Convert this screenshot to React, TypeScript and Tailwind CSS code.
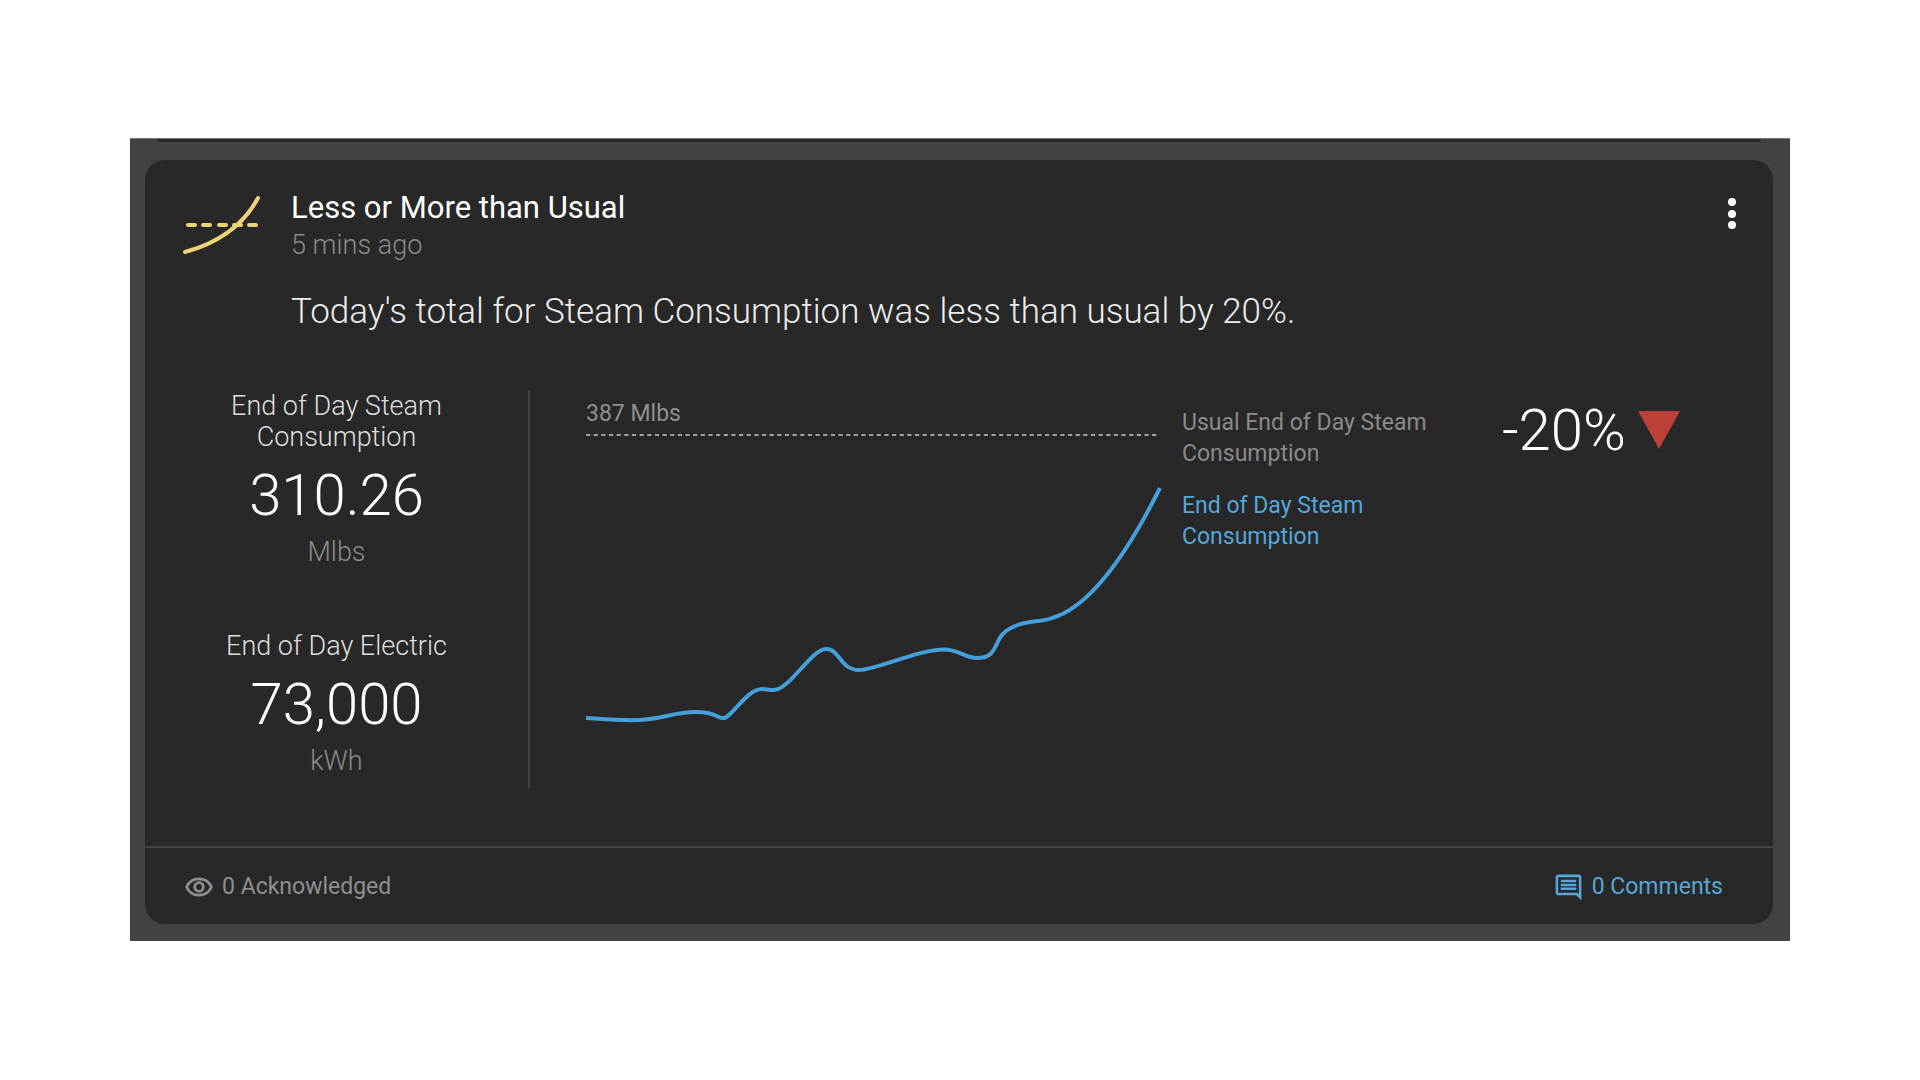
import { MdOutlineComment } from "react-icons/md";

const metrics = [
  { label: "End of Day Steam Consumption", value: "310.26", unit: "Mlbs" },
  { label: "End of Day Electric", value: "73,000", unit: "kWh" },
];

export default function App() {
  return (
    <div className="min-h-screen bg-white px-[130px] pt-[138px] pb-12 font-['Roboto',sans-serif]">
      <main className="overflow-hidden border-t border-[#777777] bg-[#424242] pr-[17px] pb-[17px] pl-[15px]">
        {/* Bottom edge of the previous card in the feed */}
        <div className="mx-3 mb-[18px] h-[3px] rounded-b-full bg-[#282828]" />

        <article className="rounded-[20px] bg-[#282828]">
          <header className="flex items-start pt-[29px] pr-[33px] pl-9">
            <TrendIcon />
            <div className="ml-[30px] flex-1">
              <h1 className="text-[31px] leading-[37px] text-white">Less or More than Usual</h1>
              <p className="text-[27px] leading-[38px] font-light text-[#8a8a8a]">5 mins ago</p>
              <p className="mt-[27px] text-[35px] leading-[42px] font-light text-[#ececec]">
                Today's total for Steam Consumption was less than usual by 20%.
              </p>
            </div>
            <button type="button" aria-label="More options" className="mt-2 cursor-pointer">
              <svg width="16" height="34" viewBox="0 0 16 34" fill="#ffffff">
                <circle cx="8" cy="5" r="4" />
                <circle cx="8" cy="17" r="4" />
                <circle cx="8" cy="28" r="4" />
              </svg>
            </button>
          </header>

          <div className="mt-[57px] flex min-h-[398px]">
            <section className="flex w-[385px] shrink-0 flex-col gap-[63px] border-r-2 border-[#424242] pt-px text-center">
              {metrics.map((m) => (
                <Metric key={m.unit} label={m.label} value={m.value} unit={m.unit} />
              ))}
            </section>

            <section className="flex flex-1 items-start pt-[9px] pr-[93px] pl-14">
              <div className="min-w-0 flex-1">
                <p className="text-[23px] leading-[30px] text-[#8f8f8f]">387 Mlbs</p>
                <UsageChart />
              </div>
              <div className="mt-2 ml-5 w-[264px] shrink-0 text-[23px] leading-[31px]">
                <p className="text-[#8a8a8a]">Usual End of Day Steam Consumption</p>
                <p className="mt-[21px] w-[200px] text-[#54a7d8]">End of Day Steam Consumption</p>
              </div>
              <div className="ml-14 flex w-[178px] shrink-0 items-center justify-between">
                <span className="text-[58px] leading-[62px] font-light text-white">-20%</span>
                <svg width="42" height="38" viewBox="0 0 42 38" fill="#bb4037">
                  <path d="M0 0H42L21 38Z" />
                </svg>
              </div>
            </section>
          </div>

          <footer className="mt-[58px] flex h-[78px] items-center justify-between border-t-2 border-[#424242] pt-0.5 pr-[50px] pl-[39px] text-[23px] leading-[30px]">
            <button type="button" className="flex cursor-pointer items-center gap-2 text-[#8f8f8f]">
              <EyeIcon />
              <span>0 Acknowledged</span>
            </button>
            <button type="button" className="flex cursor-pointer items-center gap-2 text-[#54a7d8]">
              <MdOutlineComment size={31} />
              <span>0 Comments</span>
            </button>
          </footer>
        </article>
      </main>
    </div>
  );
}

function Metric({ label, value, unit }: { label: string; value: string; unit: string }) {
  return (
    <div>
      <h2 className="mx-auto mb-2 w-60 text-[27px] leading-[31px] font-light text-[#dedede]">{label}</h2>
      <p className="text-[58px] leading-[68px] font-light text-white">{value}</p>
      <p className="mt-2 text-[27px] leading-[31px] font-light text-[#8a8a8a]">{unit}</p>
    </div>
  );
}

function TrendIcon() {
  return (
    <svg className="mt-1 shrink-0" width="80" height="64" viewBox="0 0 80 64" fill="none" stroke="#eed376" strokeWidth="4" strokeLinecap="round">
      <path d="M4 59C37 50 62 33 77 5" />
      <path d="M7 32H14M22 32H29M38 32H45M53 32H60M68 32H75" />
    </svg>
  );
}

function EyeIcon() {
  return (
    <svg width="30" height="30" viewBox="0 0 30 30" fill="none" stroke="currentColor" strokeWidth="2.8">
      <path d="M2.600 15C4.800 9.900 9.500 6.800 15 6.800S25.200 9.900 27.400 15C25.200 20.100 20.500 23.200 15 23.200S4.800 20.100 2.600 15Z" />
      <circle cx="15" cy="15" r="4.300" />
    </svg>
  );
}

function UsageChart() {
  return (
    <svg className="block w-full" viewBox="0 1 576 299" fill="none">
      <path d="M0 7H572" stroke="#a0a0a0" strokeWidth="2" strokeDasharray="4.2 3.45" />
      <path
        d="M0 290C15 291 30 292.300 45 292.300C78 292.300 84 284 110 284C131 284 130 290 137 290C146 290 160 261 176.500 261C180 261 183 262 187.500 262C204 262 225 221 240 221C254 221 254 242 273 242C290 242 332 221.500 358 221.500C373 221.500 379 230 391 230C415 230 406 208 425 200C440 191 454 195 466 190C504 179 542 124 574 60"
        stroke="#459fdb"
        strokeWidth="4"
      />
    </svg>
  );
}
